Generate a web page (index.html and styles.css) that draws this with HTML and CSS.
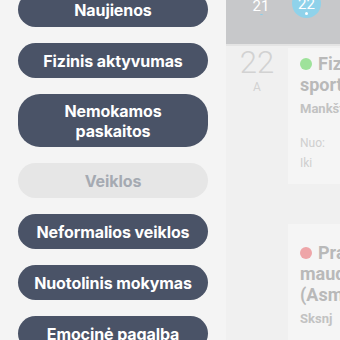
FILE: index.html
```html
<!DOCTYPE html>
<html>
<head>
<meta charset="utf-8">
<link rel="stylesheet" href="styles.css">
</head>
<body>
<div class="screen">
  <nav class="drawer">
    <div class="btn">Naujienos</div>
    <div class="btn">Fizinis aktyvumas</div>
    <div class="btn two">Nemokamos<br>paskaitos</div>
    <div class="btn off">Veiklos</div>
    <div class="btn">Neformalios veiklos</div>
    <div class="btn">Nuotolinis mokymas</div>
    <div class="btn">Emocinė pagalba</div>
  </nav>
  <main class="main">
    <header class="week">
      <div class="day"><span class="num">21</span><span class="dot"></span></div>
      <div class="day sel"><span class="num">22</span><span class="dot"></span></div>
    </header>
    <section class="agenda">
      <div class="date"><span class="dnum">22</span><span class="dw">A</span></div>
      <div class="cards">
        <div class="card c1">
          <div class="title"><span class="bullet green"></span>Fizinis<br>sportas</div>
          <div class="sub">Mankšta</div>
          <div class="time first">Nuo:</div>
          <div class="time">Iki</div>
        </div>
        <div class="card c2">
          <div class="title"><span class="bullet red"></span>Pratimai<br>maudymasis<br>(Asmeninis)</div>
          <div class="sub">Sksnj</div>
        </div>
      </div>
    </section>
  </main>
</div>
</body>
</html>
```
FILE: styles.css
```css
html, body { margin: 0; padding: 0; }
body { width: 340px; height: 340px; overflow: hidden; background: #f1f1f1; font-family: "Inter", "Liberation Sans", sans-serif; }
.screen { display: flex; width: 340px; height: 340px; overflow: hidden; }
.drawer { width: 190px; flex: none; background: #f4f4f4; padding: 0 18px; display: flex; flex-direction: column; gap: 16px; margin-top: -8px; }
.btn { background: #4a5367; color: #fff; border-radius: 18px; height: 35px; flex: none; display: flex; align-items: center; justify-content: center; text-align: center; font-weight: 700; font-size: 16px; line-height: 20px; letter-spacing: -0.1px; }
.btn.two { height: 53px; border-radius: 22px; }
.btn.off { background: #e6e6e6; color: #a5aab2; }
.main { flex: 1; display: flex; flex-direction: column; background: #f0f0f0; overflow: hidden; }
.week { height: 44px; flex: none; background: #c7c8ca; display: flex; align-items: flex-start; padding-left: 21px; gap: 17px; border-bottom: 2px solid #e4e4e4; }
.day { width: 28px; height: 15px; display: flex; flex-direction: column; align-items: center; justify-content: flex-end; padding-bottom: 2px; box-sizing: content-box; }
.day .num { color: #fff; font-family: "Roboto", sans-serif; font-size: 15px; line-height: 12px; height: 10px; overflow: visible; }
.day .dot { width: 3px; height: 3px; border-radius: 50%; background: #8ad0ea; margin-top: 4px; }
.day.sel { background: #8fd2ea; border-radius: 50%; width: 29px; height: 29px; margin-top: -11px; padding-bottom: 3px; box-sizing: border-box; }
.day.sel .dot { background: #fff; }
.agenda { display: flex; flex: 1; }
.date { width: 62px; flex: none; display: flex; flex-direction: column; align-items: center; padding-top: 2px; color: #d2d2d2; font-family: "Roboto", sans-serif; }
.dnum { font-size: 31px; font-weight: 300; line-height: 29px; }
.dw { font-size: 12px; line-height: 12px; margin-top: 4px; }
.cards { flex: 1; display: flex; flex-direction: column; gap: 40px; padding-top: 2px; }
.card { background: #f5f5f5; padding: 5px 0 0 12px; color: #b9b9b9; font-family: "Roboto", sans-serif; }
.c1 { height: 136px; box-sizing: border-box; }
.c2 { flex: 1; padding-top: 18px; }
.title { font-weight: 700; font-size: 18px; line-height: 21px; white-space: nowrap; }
.bullet { display: inline-block; width: 12px; height: 12px; border-radius: 50%; margin-right: 6px; vertical-align: 0; }
.green { background: #9ee29a; }
.red { background: #eea5a8; }
.sub { font-weight: 700; font-size: 13px; margin-top: 6px; color: #c2c2c2; }
.time { font-size: 12px; color: #cfcfcf; margin-top: 6px; }
.time.first { margin-top: 20px; }
```
